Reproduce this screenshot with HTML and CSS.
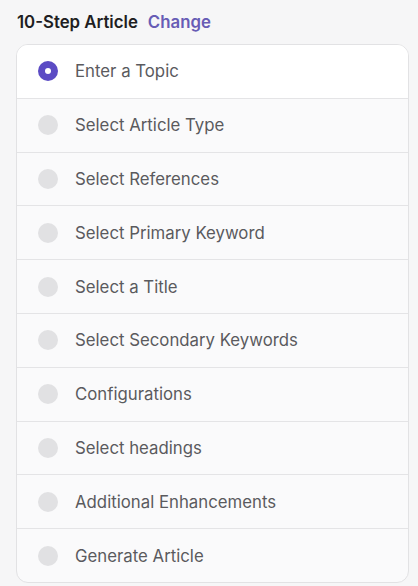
FILE: index.html
```html
<!DOCTYPE html>
<html>
<head>
<meta charset="utf-8">
<link rel="stylesheet" href="styles.css">
</head>
<body>
<div class="page">
  <div class="header">
    <span class="title">10-Step Article</span>
    <a class="change">Change</a>
  </div>
  <ul class="steps">
    <li class="step active"><span class="dot"></span><span class="label">Enter a Topic</span></li>
    <li class="step"><span class="dot"></span><span class="label">Select Article Type</span></li>
    <li class="step"><span class="dot"></span><span class="label">Select References</span></li>
    <li class="step"><span class="dot"></span><span class="label">Select Primary Keyword</span></li>
    <li class="step"><span class="dot"></span><span class="label">Select a Title</span></li>
    <li class="step"><span class="dot"></span><span class="label">Select Secondary Keywords</span></li>
    <li class="step"><span class="dot"></span><span class="label">Configurations</span></li>
    <li class="step"><span class="dot"></span><span class="label">Select headings</span></li>
    <li class="step"><span class="dot"></span><span class="label">Additional Enhancements</span></li>
    <li class="step"><span class="dot"></span><span class="label">Generate Article</span></li>
  </ul>
</div>
</body>
</html>
```
FILE: styles.css
```css
html, body {
  margin: 0;
  padding: 0;
  background: #f6f6f7;
  font-family: Inter, "Noto Sans", sans-serif;
}
.page {
  padding: 12px 9px 0 16px;
}
.header {
  display: flex;
  align-items: baseline;
  gap: 10px;
  padding-left: 1px;
  height: 32px;
}
.title {
  font-size: 16.8px;
  font-weight: 600;
  color: #1e1e22;
}
.change {
  font-size: 16.8px;
  font-weight: 600;
  color: #675cb5;
}
.steps {
  list-style: none;
  margin: 0;
  padding: 0;
  border: 1px solid #e2e2e4;
  border-radius: 12px;
  background: #fafafb;
  overflow: hidden;
}
.step {
  display: flex;
  align-items: center;
  height: 52.8px;
  padding-left: 21px;
  border-bottom: 1px solid #e4e4e6;
}
.step:last-child {
  border-bottom: none;
}
.step.active {
  background: #ffffff;
}
.dot {
  width: 20px;
  height: 20px;
  border-radius: 50%;
  background: #e1e1e3;
  margin-right: 17px;
  flex: none;
  display: flex;
  align-items: center;
  justify-content: center;
}
.active .dot {
  background: #5b4bc4;
}
.active .dot::after {
  content: "";
  width: 6px;
  height: 6px;
  border-radius: 50%;
  background: #ffffff;
}
.label {
  font-size: 16.8px;
  color: #5a5a5e;
}
```
